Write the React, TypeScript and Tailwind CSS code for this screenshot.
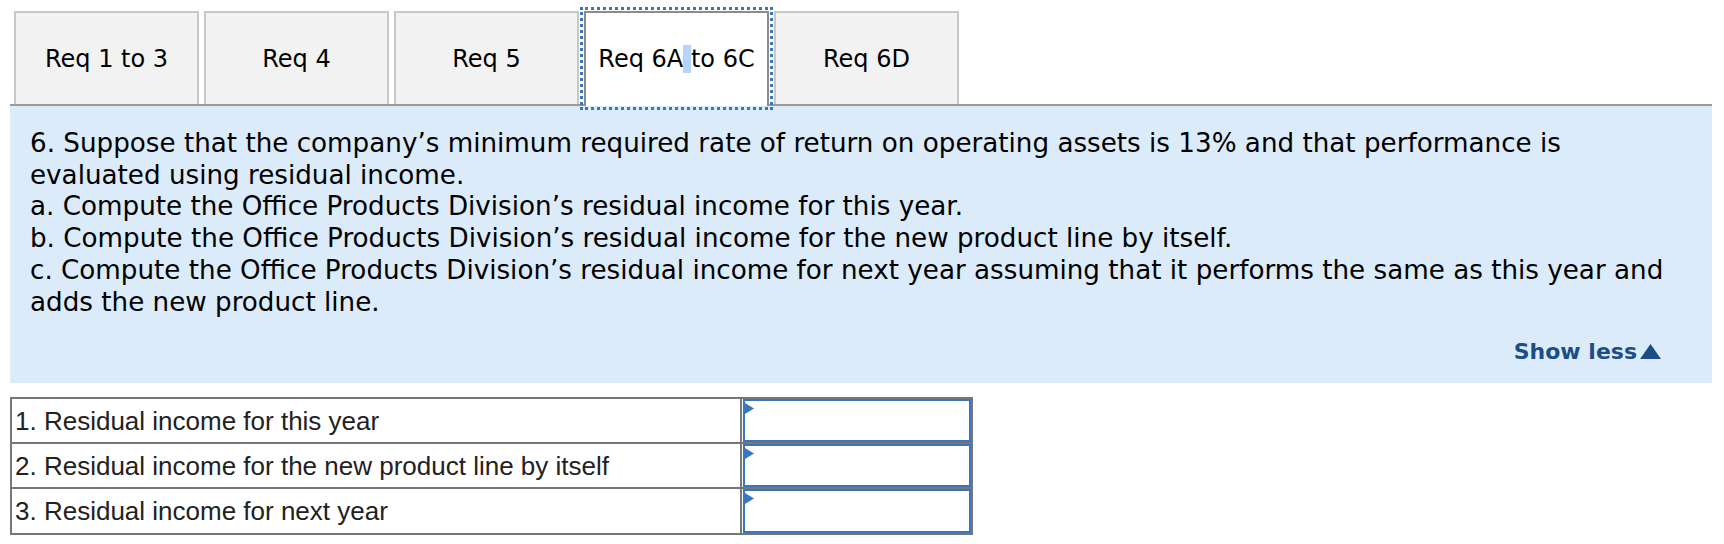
import { useState } from "react";

const tabs = ["Req 1 to 3", "Req 4", "Req 5", "Req 6A to 6C", "Req 6D"];

const questionLines = [
  "6. Suppose that the company\u2019s minimum required rate of return on operating assets is 13% and that performance is",
  "evaluated using residual income.",
  "a. Compute the Office Products Division\u2019s residual income for this year.",
  "b. Compute the Office Products Division\u2019s residual income for the new product line by itself.",
  "c. Compute the Office Products Division\u2019s residual income for next year assuming that it performs the same as this year and",
  "adds the new product line.",
];

const rows = [
  "1. Residual income for this year",
  "2. Residual income for the new product line by itself",
  "3. Residual income for next year",
];

function TabLabel({ label }: { label: string }) {
  if (label !== "Req 6A to 6C") return <span>{label}</span>;
  // the reference shows the space after "6A" highlighted (text selection)
  return (
    <span className="whitespace-pre">
      Req 6A<span className="bg-[#b4d5fe]">{" "}</span>to 6C
    </span>
  );
}

function AnswerInput() {
  return (
    <div className="relative h-full border-2 border-[#3a76bd] bg-white">
      <svg
        className="absolute left-0 top-[2px]"
        width="9"
        height="11"
        viewBox="0 0 9 11"
      >
        <polygon points="0,0 9,5.5 0,11" fill="#3a76bd" />
      </svg>
    </div>
  );
}

export default function App() {
  const [active, setActive] = useState(3);

  return (
    <div className="w-[1724px] h-[544px] bg-white pl-[10px] pt-[11px]">
      <div className="w-[1702px]">
        {/* tab row */}
        <div className="flex items-start gap-[5px] pl-[4px] font-['DejaVu_Sans',Verdana,sans-serif] text-[24px] text-black">
          {tabs.map((t, i) =>
            i === active ? (
              <button
                key={t}
                onClick={() => setActive(i)}
                className="relative z-10 -mb-[2px] flex h-[95px] w-[185px] items-center justify-center border-2 border-b-0 border-[#8c8c8c] bg-white pb-[2px] outline-[3px] outline-dotted outline-[#3a76bd] outline-offset-[1px]"
              >
                <TabLabel label={t} />
              </button>
            ) : (
              <button
                key={t}
                onClick={() => setActive(i)}
                className="flex h-[93px] w-[185px] items-center justify-center border-2 border-b-0 border-[#c8c8c8] bg-[#f2f2f2]"
              >
                <TabLabel label={t} />
              </button>
            )
          )}
        </div>

        {/* question panel */}
        <div className="border-t-2 border-[#9a9a9a] bg-[#dbebf9] pl-5 pr-[51px] pt-[22px] pb-[19px] font-['DejaVu_Sans',Verdana,sans-serif]">
          <div className="text-[26.2px] leading-[31.7px] text-black">
            {questionLines.map((line) => (
              <div key={line} className="whitespace-nowrap">
                {line}
              </div>
            ))}
          </div>
          <div className="mt-[22px] flex justify-end">
            <button className="flex items-end gap-[3px] text-[22px] font-bold leading-[24px] text-[#1c4d86]">
              Show less
              <svg width="21" height="15" viewBox="0 0 21 15" className="mb-[5px]">
                <polygon points="10.5,0 21,15 0,15" fill="#1c4d86" />
              </svg>
            </button>
          </div>
        </div>

        {/* answer table */}
        <div className="mt-[14px] w-[963px] border-2 border-[#777] font-['Liberation_Sans',Arial,sans-serif] text-[26px] text-[#222]">
          {rows.map((r, i) => (
            <div
              key={r}
              className={`flex ${i < rows.length - 1 ? "h-[45px] border-b-2 border-[#777]" : "h-[44px]"}`}
            >
              <div className="flex w-[730px] items-center border-r-2 border-[#777] pl-[3px] leading-none">
                {r}
              </div>
              <div className="flex-1 pl-[1px]">
                <AnswerInput />
              </div>
            </div>
          ))}
        </div>
      </div>
    </div>
  );
}
